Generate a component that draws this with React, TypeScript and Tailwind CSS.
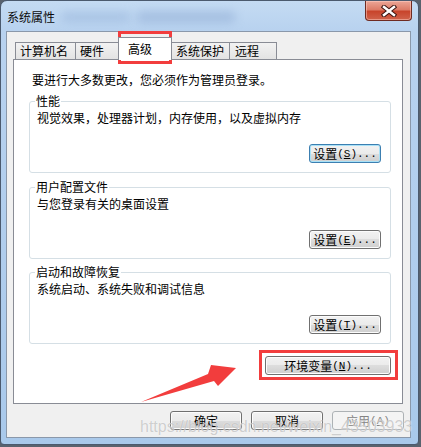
import { ReactNode } from 'react';
import clsx from 'clsx';

const Latin = ({ children }: { children: ReactNode }) => (
  <span className="font-['Liberation_Mono',monospace] text-[11px]">{children}</span>
);

const WinButton = ({
  children,
  className,
  focused,
  disabled,
}: {
  children: ReactNode;
  className?: string;
  focused?: boolean;
  disabled?: boolean;
}) => (
  <button
    className={clsx(
      'h-[19px] rounded-[3px] border flex items-center justify-center leading-[12px] text-[12px]',
      focused &&
        'border-[#3c7fb1] shadow-[inset_0_0_0_1px_#a8e1f7] bg-[linear-gradient(#f2f2f2_0%,#ebebeb_50%,#dddddd_50%,#cfcfcf_100%)]',
      disabled && 'border-[#adb2b5] bg-[#f4f4f4] text-[#838383]',
      !focused &&
        !disabled &&
        'border-[#707070] shadow-[inset_0_0_0_1px_#fcfcfc] bg-[linear-gradient(#f2f2f2_0%,#ebebeb_50%,#dddddd_50%,#cfcfcf_100%)]',
      className
    )}
  >
    {children}
  </button>
);

const GroupBox = ({ legend, desc, btn }: { legend: string; desc: string; btn: ReactNode }) => (
  <div className="relative ml-[15px] w-[362px] h-[72px] rounded-[3px] border border-[#d5dfe5] flex flex-col">
    <span className="absolute left-[5px] top-[-7px] px-[1px] bg-white leading-[12px]">{legend}</span>
    <p className="mt-[10px] pl-[7px] leading-[12px]">{desc}</p>
    <div className="mt-auto mb-[9px] mr-[9px] self-end">{btn}</div>
  </div>
);

const Tab = ({ label, className }: { label: string; className?: string }) => (
  <div
    className={clsx(
      'h-[17px] border border-b-0 border-[#898c95] bg-[linear-gradient(#f2f2f2,#e3e3e3)] pl-[4px] pt-[2px] leading-[12px]',
      className
    )}
  >
    {label}
  </div>
);

export default function App() {
  return (
    <div className="relative w-[421px] h-[447px] overflow-hidden bg-[#59626e] font-['Noto_Sans_CJK_SC',sans-serif] text-[12px] text-black">
      <div className="w-[419px] h-[445px] rounded-t-[7px] rounded-b-[4px] border border-[#4b5a6e] bg-[linear-gradient(180deg,#c4dbf3_0px,#b8d2ef_30px,#a9c9eb_100%)] flex flex-col">
        {/* title bar */}
        <div className="relative h-[30px] flex items-start">
          <span className="absolute left-[60px] top-[11px] w-[70px] h-[10px] rounded-full bg-[#9bb7dc] blur-[5px] opacity-60" />
          <span className="absolute left-[135px] top-[10px] w-[100px] h-[12px] rounded-full bg-[#8eaad3] blur-[5px] opacity-50" />
          <span className="relative ml-[6px] mt-[10px] leading-[12px] text-[#0b0b0b]">系统属性</span>
          <div className="relative ml-auto mr-[6px] w-[47px] h-[20px] rounded-b-[4px] border border-t-0 border-[#6e2b22] bg-[linear-gradient(#eba697_0%,#dc7c68_45%,#c8452c_55%,#d0634b_100%)] shadow-[inset_0_0_0_1px_rgba(255,210,200,0.5)] flex items-center justify-center">
            <svg width="16" height="12" viewBox="0 0 16 12">
              <path d="M3 2 L13 10 M13 2 L3 10" stroke="#3a1410" strokeWidth="4.5" strokeLinecap="square" />
              <path d="M3 2 L13 10 M13 2 L3 10" stroke="#ffffff" strokeWidth="2.5" strokeLinecap="square" />
            </svg>
          </div>
        </div>

        {/* client area */}
        <div className="ml-[5px] w-[405px] h-[407px] border border-[#8a98aa] bg-[#f0f0f0] flex flex-col">
          {/* tabs */}
          <div className="mt-[5px] ml-[8px] h-[22px] flex items-end relative z-10">
            <Tab label="计算机名" className="w-[61px]" />
            <Tab label="硬件" className="-ml-px w-[44px]" />
            <div className="-ml-px w-[54px] h-[23px] -mb-px border border-b-0 border-[#898c95] bg-white pl-[9px] pt-[5px] leading-[12px]">
              高级
            </div>
            <Tab label="系统保护" className="-ml-px w-[59px]" />
            <Tab label="远程" className="-ml-px w-[48px] pl-[5px]" />
          </div>

          {/* panel */}
          <div className="ml-[6px] w-[390px] h-[345px] border border-[#898c95] bg-white flex flex-col">
            <p className="mt-[14px] pl-[18px] leading-[12px]">要进行大多数更改，您必须作为管理员登录。</p>
            <div className="mt-[15px]">
              <GroupBox
                legend="性能"
                desc="视觉效果，处理器计划，内存使用，以及虚拟内存"
                btn={
                  <WinButton focused className="w-[72px]">
                    设置<Latin>(<u>S</u>)...</Latin>
                  </WinButton>
                }
              />
            </div>
            <div className="mt-[14px]">
              <GroupBox
                legend="用户配置文件"
                desc="与您登录有关的桌面设置"
                btn={
                  <WinButton className="w-[72px]">
                    设置<Latin>(<u>E</u>)...</Latin>
                  </WinButton>
                }
              />
            </div>
            <div className="mt-[13px]">
              <GroupBox
                legend="启动和故障恢复"
                desc="系统启动、系统失败和调试信息"
                btn={
                  <WinButton className="w-[72px]">
                    设置<Latin>(<u>T</u>)...</Latin>
                  </WinButton>
                }
              />
            </div>
            <div className="mt-[12px] mr-[11px] self-end">
              <WinButton className="w-[126px]">
                环境变量<Latin>(<u>N</u>)...</Latin>
              </WinButton>
            </div>
          </div>

          {/* dialog buttons */}
          <div className="mt-[7px] pr-[6px] flex justify-end gap-[9px]">
            <WinButton className="w-[72px]">确定</WinButton>
            <WinButton className="w-[72px]">取消</WinButton>
            <WinButton disabled className="w-[72px]">
              应用<Latin>(<u>A</u>)</Latin>
            </WinButton>
          </div>
        </div>
      </div>

      {/* annotations */}
      <div className="absolute left-[118px] top-[31px] w-[54px] h-[33px] border-[3px] border-[#f23d3d]" />
      <div className="absolute left-[259px] top-[350px] w-[139px] h-[30px] border-[3px] border-[#f23d3d]" />
      <svg className="absolute left-0 top-0" width="421" height="447" viewBox="0 0 421 447">
        <polygon
          points="141,402 208,374 211,365 236,368 218,386 214,381"
          fill="#f23d3d"
        />
      </svg>

      {/* watermark */}
      <span className="absolute left-[140px] top-[417px] whitespace-nowrap font-['Liberation_Sans',sans-serif] text-[16px] leading-[20px] text-[rgba(150,150,150,0.45)] [text-shadow:0_0_1px_rgba(255,255,255,0.9)]">
        https://blog.csdn.net/weixin_43503933
      </span>
    </div>
  );
}
